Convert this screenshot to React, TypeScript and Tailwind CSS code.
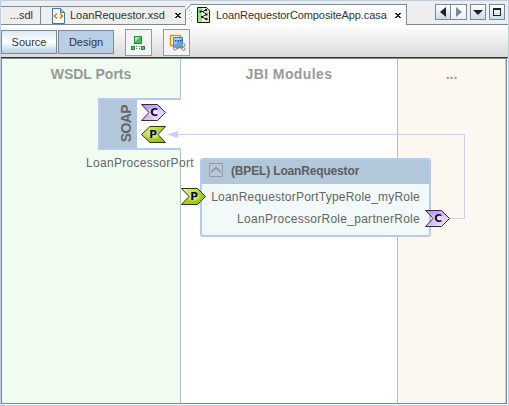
import React from "react";

type PortProps = { kind: "P" | "C"; flip?: boolean; id: string };

function Port({ kind, flip, id }: PortProps) {
  const green = kind === "P";
  const d = flip ? "M24.5 .5H9L.5 8.5L9 16.5H24.5L17 8.5Z" : "M.5 .5H16.5L24.5 8.5L16.5 16.5H.5L8 8.5Z";
  return (
    <svg width="25" height="17" viewBox="0 0 25 17" className="block">
      <defs>
        <linearGradient id={id} x1={green ? "1" : "0"} y1={green ? "1" : "0"} x2={green ? "0" : "1"} y2={green ? "0" : "1"}>
          <stop offset="0" stopColor={green ? "#92bd00" : "#b98af0"} />
          <stop offset=".45" stopColor={green ? "#a8d010" : "#d3aefb"} />
          <stop offset=".75" stopColor={green ? "#cbe566" : "#ead6ff"} />
          <stop offset="1" stopColor={green ? "#e8f5b8" : "#ffffff"} />
        </linearGradient>
        <radialGradient id={id + "g"} cx=".5" cy=".5" r=".32">
          <stop offset="0" stopColor="#ffffff" stopOpacity=".95" />
          <stop offset="1" stopColor="#ffffff" stopOpacity="0" />
        </radialGradient>
      </defs>
      <path d={d} fill={`url(#${id})`} />
      <path d={d} fill={`url(#${id}g)`} stroke="#303030" />
      <text x={flip ? 12 : 13} y="12.3" textAnchor="middle" fontSize="10.5" fontWeight="700" fill="#08083c" fontFamily="DejaVu Sans, sans-serif">{kind}</text>
    </svg>
  );
}

function Close() {
  return (
    <svg width="6" height="5" viewBox="0 0 6 5" shapeRendering="crispEdges" className="shrink-0">
      <path d="M0 0h2v1h2V0h2v1H5v1H4v1h1v1h1v1H4V4H2v1H0V4h1V3h1V2H1V1H0z" fill="#222" />
    </svg>
  );
}

function NavButton({ children, className = "" }: { children: React.ReactNode; className?: string }) {
  return (
    <span className={"flex h-4 w-4 items-center justify-center border border-[#7a8a99] bg-gradient-to-b from-white to-[#c8dcef] " + className}>
      {children}
    </span>
  );
}

function DeployIcon() {
  return (
    <svg width="16" height="16" viewBox="0 0 16 16" className="-ml-px">
      <rect x="4.500" y="1.500" width="7" height="7" fill="#48b95d" stroke="#218c3b" />
      <path d="M5 2h5L5 7z" fill="#a0e6a9" />
      <g fill="#5cc46e" stroke="#218c3b">
        <rect x="1.500" y="11.500" width="3" height="3" />
        <rect x="11.500" y="11.500" width="3" height="3" />
      </g>
      <path d="M6 11h1v1H6zm3 0h1v1H9zM6 13h1v1H6zm3 0h1v1H9z" fill="#42704a" />
    </svg>
  );
}

function ConfigIcon() {
  return (
    <svg width="18" height="18" viewBox="0 0 18 18">
      <path d="M2.500 1.500h10v10h-10z" fill="#fff4d0" stroke="#d4991c" strokeWidth="1.400" />
      <path d="M5.500 3.500h9v10h-9z" fill="#63a6ed" stroke="#3b80cf" />
      <path d="M6 4h8L6 11z" fill="#a5d0fa" />
      <path d="M7 6h1.500v1.500H7zm2.500 0H11v1.500H9.500zM12 6h1.500v1.500H12z" fill="#174a94" />
      <path d="M7.500 14.500h2l4-3M9.500 11.500l4 3" fill="none" stroke="#85898c" strokeWidth="1.500" />
      <g stroke="#85898c" fill="#f4f4f4">
        <circle cx="7" cy="14.500" r="1.500" />
        <circle cx="15.500" cy="11" r="1.500" />
        <circle cx="15.500" cy="15" r="1.500" />
      </g>
    </svg>
  );
}

function ToolButton({ children }: { children: React.ReactNode }) {
  return <span className="flex h-[27px] w-[27px] items-center justify-center border border-[#999] bg-[#f4f4f4]">{children}</span>;
}

export default function App() {
  return (
    <div className="flex h-[406px] w-[509px] flex-col overflow-hidden border border-[#b8cfe5] bg-white font-['Liberation_Sans',Arial,sans-serif] text-[#333]">
      <div className="relative flex h-6 shrink-0 whitespace-nowrap bg-[#eee] text-[11px]">
        <div className="mt-[5px] flex h-[19px] w-10 items-center justify-end border-t border-r border-b border-[#7a8a99] pr-[7px]">...sdl</div>
        <div className="mt-[5px] flex h-[19px] w-[145px] items-center border-t border-r border-b border-[#7a8a99]">
          <svg width="13" height="16" viewBox="0 0 13 16" className="ml-[11px] shrink-0">
            <path d="M.5 .5h8l4 4v11H.5z" fill="#f7fbff" stroke="#3a76b8" />
            <path d="M8.500 .5v4h4" fill="#9cc4ee" stroke="#3a76b8" />
            <path d="M5 5.500L2.500 8L5 10.500M8 5.500L10.500 8L8 10.500" fill="none" stroke="#c98a10" strokeWidth="1.700" />
          </svg>
          <span className="ml-[5px] w-[105px] shrink-0">LoanRequestor.xsd</span>
          <Close />
        </div>
        <div className="relative mt-[3px] flex h-[21px] w-[221px] items-center border-t border-r border-[#7a8a99] bg-white">
          <svg width="7" height="21" viewBox="0 0 7 21" className="absolute -left-px -top-px">
            <path d="M0 0h6L0 6z" fill="#eee" />
            <path d="M0 6.500L6.500 .5" stroke="#7a8a99" />
          </svg>
          <svg width="3" height="14" viewBox="0 0 3 14" className="ml-[3px] shrink-0" shapeRendering="crispEdges">
            <path d="M0 2h1v1H0zm2 2h1v1H2zM0 6h1v1H0zm2 2h1v1H2zM0 10h1v1H0zm2 2h1v1H2z" fill="#99a4af" />
          </svg>
          <svg width="13" height="16" viewBox="0 0 13 16" className="ml-[5px] shrink-0">
            <path d="M.5 .5h9l3 3v12H.5z" fill="#8fe88a" stroke="#111" />
            <path d="M5 1h3v14H5z" fill="#fff" />
            <path d="M8 1h1.500L12 3.500V15H8z" fill="#ffdca0" />
            <path d="M3 4.500h3M6 4.500l3-1.500M6 5l3 2M9 7.500L5 10l4 2" fill="none" stroke="#111" />
            <path d="M2.500 3.500h2v2h-2zM8 2h2v2H8zm.5 4.500h2v2h-2zM4 9h2v2H4zm4.500 2h2v2h-2z" fill="#111" />
          </svg>
          <span className="ml-[6px] w-[179px] shrink-0 tracking-[-.1px]">LoanRequestorCompositeApp.casa</span>
          <Close />
        </div>
        <div className="flex flex-1 items-start justify-end border-b border-[#7a8a99] pr-[3px] pt-[3px]">
          <NavButton><svg width="6" height="10" viewBox="0 0 6 10"><path d="M6 0v10L0 5z" fill="#222" /></svg></NavButton>
          <NavButton className="border-l-0 from-[#eee] to-[#eee]"><svg width="6" height="10" viewBox="0 0 6 10"><path d="M0 0v10l6-5z" fill="#7a8a99" /></svg></NavButton>
          <NavButton className="ml-[3px]"><svg width="10" height="5" viewBox="0 0 10 5"><path d="M0 0h10L5 5z" fill="#222" /></svg></NavButton>
          <NavButton className="ml-[3px]"><svg width="8" height="8" viewBox="0 0 8 8" shapeRendering="crispEdges"><path d="M0 0h8v8H0zM1 2v5h6V2z" fillRule="evenodd" fill="#222" /></svg></NavButton>
        </div>
      </div>
      <div className="flex h-[33px] shrink-0 items-start border-b border-[#333] bg-gradient-to-b from-white to-[#dadada] pt-[5px] text-[11px]">
        <span className="flex h-6 w-[56px] items-center justify-center border border-[#7a8a99] bg-gradient-to-b from-[#dde8f3] via-white to-[#b8cfe5] pt-px">Source</span>
        <span className="ml-px flex h-6 w-[56px] items-center justify-center border border-[#7a8a99] bg-[#b8cfe5] pt-px">Design</span>
        <span className="-mt-px ml-[11px] flex gap-[11px]">
          <ToolButton><DeployIcon /></ToolButton>
          <ToolButton><ConfigIcon /></ToolButton>
        </span>
      </div>
      <div className="relative mb-px mr-px flex flex-1 border border-[#7a8a99] text-center text-[14px] font-bold text-[#999]">
        <div className="w-[179px] border-r border-[#bbb] bg-[#f0fcf0] pt-[5px]">WSDL Ports</div>
        <div className="w-[217px] border-r border-[#bbb] bg-white pt-[5px] tracking-[.4px]">JBI Modules</div>
        <div className="flex-1 border-r border-[#ccc] bg-[#fcf8f0] pt-[5px]">...</div>

        <div className="absolute left-[96px] top-[39px] flex h-[52px] w-[83px] border-2 border-r-0 border-[#b7cbf0] bg-white">
          <div className="flex w-[37px] items-center justify-end bg-[#b3c7db] pr-[2px] text-[14px] text-[#666]">
            <span className="rotate-180 leading-[18px] tracking-[-.6px] [writing-mode:vertical-rl]">SOAP</span>
          </div>
          <div className="flex flex-col gap-[5px] pl-[4px] pt-[4px]">
            <Port kind="C" id="soap-c" />
            <Port kind="P" id="soap-p" flip />
          </div>
        </div>
        <div className="absolute left-[84px] top-[95px] whitespace-nowrap text-[12px] font-normal tracking-[.3px] text-[#666]">LoanProcessorPort</div>

        <div className="absolute left-[198px] top-[99px] flex h-[79px] w-[231px] flex-col rounded-[3px] border-2 border-[#b7cbf0] bg-[#f1f9f9] text-[12px] text-[#666]">
          <div className="flex h-[24px] items-center bg-[#b3c7db]">
            <svg width="14" height="14" viewBox="0 0 14 14" className="ml-[7px] -mt-[4px]">
              <path d="M.5 .5h13v13H.5z" fill="none" stroke="#999" />
              <path d="M2.500 9L7 4.500L11.500 9" fill="none" stroke="#888" strokeWidth="1.200" />
            </svg>
            <span className="-mt-[2px] ml-[8px] whitespace-nowrap tracking-[-.16px] text-[#5e5e5e]">(BPEL) LoanRequestor</span>
          </div>
          <div className="pr-[9px] text-right font-normal">
            <div className="h-[22px] whitespace-nowrap leading-[26px] tracking-[.21px]">LoanRequestorPortTypeRole_myRole</div>
            <div className="h-[22px] whitespace-nowrap leading-[26px] tracking-[.28px]">LoanProcessorRole_partnerRole</div>
          </div>
        </div>

        <svg className="absolute left-[165px] top-[68px]" width="300" height="96" viewBox="0 0 300 96">
          <path d="M283 91.500H297.500V7.500H10" fill="none" stroke="#ccccff" />
          <path d="M0 7.500L11 4v7z" fill="#ccccff" />
        </svg>
        <div className="absolute left-[179px] top-[129px]"><Port kind="P" id="module-p" /></div>
        <div className="absolute left-[423px] top-[151px]"><Port kind="C" id="module-c" /></div>
      </div>
    </div>
  );
}
